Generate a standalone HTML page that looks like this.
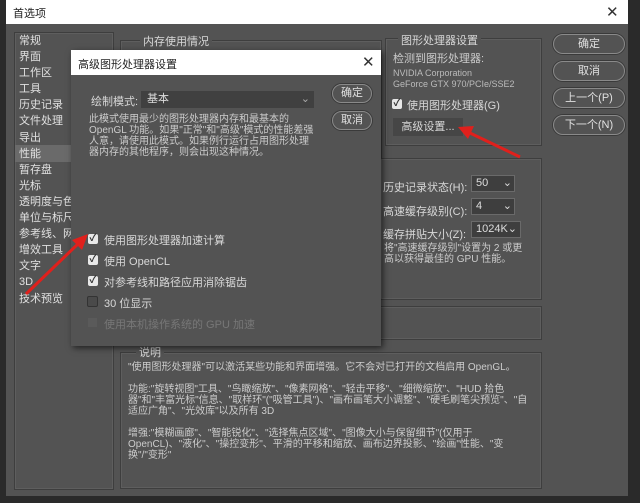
<html><head><style>
body{margin:0;width:640px;height:503px;background:#2a2a2a;position:relative;overflow:hidden;font-family:"Liberation Sans","Noto Sans CJK SC",sans-serif;font-size:11px;color:#d8d8d8}
.a{position:absolute}
.box{position:absolute;border:1px solid #3e3e3e;box-shadow:inset 0 0 0 1px #5e5e5e}
.btn{position:absolute;border:1px solid #8a8a8a;border-radius:11px;text-align:center;color:#e0e0e0;background:#535353;box-shadow:0 0 0 1px #3a3a3a}
.cb{position:absolute;width:10px;height:10px;background:#e8e8e8;border-radius:2px;color:#333;font-size:10px;line-height:10px;text-align:center;font-weight:bold}
.sel{position:absolute;background:#3e3e3e;border:1px solid #6a6a6a;color:#ddd;padding-left:4px;line-height:15px}
</style></head><body>
<div class="a" style="left:6px;top:0;width:622px;height:24px;background:#fff"></div>
<div class="a" style="left:13px;top:5px;color:#222;font-size:11px">首选项</div>
<div class="a" style="left:606px;top:3px;color:#333;font-size:15px">✕</div>
<div class="a" style="left:6px;top:24px;width:622px;height:472px;background:#535353"></div>
<div class="box" style="left:14px;top:32px;width:98px;height:456px"></div>
<div class="a" style="left:15px;top:145px;width:56px;height:17px;background:#6a6a6a"></div>
<div class="a" style="left:19px;top:33px;line-height:16.1px;color:#e0e0e0">常规<br>界面<br>工作区<br>工具<br>历史记录<br>文件处理<br>导出<br>性能<br>暂存盘<br>光标<br>透明度与色域<br>单位与标尺<br>参考线、网格<br>增效工具<br>文字<br>3D<br>技术预览</div>
<div class="box" style="left:120px;top:40px;width:260px;height:120px"></div>
<div class="a" style="left:140px;top:33px;background:#535353;padding:0 3px">内存使用情况</div>
<div class="box" style="left:385px;top:38px;width:155px;height:106px"></div>
<div class="a" style="left:398px;top:32px;background:#535353;padding:0 3px">图形处理器设置</div>
<div class="a" style="left:393px;top:50px;color:#ccc">检测到图形处理器:</div>
<div class="a" style="left:393px;top:68px;color:#bbb;font-size:9px;line-height:11px">NVIDIA Corporation<br>GeForce GTX 970/PCIe/SSE2</div>
<div class="cb" style="left:392px;top:99px">✓</div>
<div class="a" style="left:407px;top:97px">使用图形处理器(G)</div>
<div class="a" style="left:393px;top:118px;width:70px;height:18px;background:#464646;line-height:18px;text-align:center">高级设置...</div>
<div class="box" style="left:380px;top:158px;width:160px;height:140px"></div>
<div class="a" style="left:383px;top:177px;line-height:23.5px">历史记录状态(H):<br>高速缓存级别(C):<br>缓存拼贴大小(Z):</div>
<div class="sel" style="left:471px;top:175px;width:38px">50 <span style="float:right;padding-right:2px">⌄</span></div>
<div class="sel" style="left:471px;top:198px;width:38px">4 <span style="float:right;padding-right:2px">⌄</span></div>
<div class="sel" style="left:471px;top:221px;width:44px">1024K⌄</div>
<div class="a" style="left:384px;top:243px;font-size:10px;line-height:11px;color:#ccc">将"高速缓存级别"设置为 2 或更<br>高以获得最佳的 GPU 性能。</div>
<div class="box" style="left:120px;top:306px;width:420px;height:32px"></div>
<div class="box" style="left:120px;top:352px;width:420px;height:135px"></div>
<div class="a" style="left:136px;top:344px;background:#535353;padding:0 3px">说明</div>
<div class="a" style="left:128px;top:362px;width:400px;font-size:10px;line-height:11px;color:#ccc">"使用图形处理器"可以激活某些功能和界面增强。它不会对已打开的文档启用 OpenGL。<br><br>功能:"旋转视图"工具、"鸟瞰缩放"、"像素网格"、"轻击平移"、"细微缩放"、"HUD 拾色器"和"丰富光标"信息、"取样环"("吸管工具")、"画布画笔大小调整"、"硬毛刷笔尖预览"、"自适应广角"、"光效库"以及所有 3D<br><br>增强:"模糊画廊"、"智能锐化"、"选择焦点区域"、"图像大小与保留细节"(仅用于 OpenCL)、"液化"、"操控变形"、平滑的平移和缩放、画布边界投影、"绘画"性能、"变换"/"变形"</div>
<div class="btn" style="left:553px;top:34px;width:70px;height:18px;line-height:18px">确定</div>
<div class="btn" style="left:553px;top:61px;width:70px;height:18px;line-height:18px">取消</div>
<div class="btn" style="left:553px;top:88px;width:70px;height:18px;line-height:18px">上一个(P)</div>
<div class="btn" style="left:553px;top:115px;width:70px;height:18px;line-height:18px">下一个(N)</div>
<!-- dialog -->
<div class="a" style="left:71px;top:50px;width:310px;height:296px;background:#535353;box-shadow:2px 2px 6px rgba(0,0,0,.6)"></div>
<div class="a" style="left:71px;top:50px;width:310px;height:25px;background:#fff"></div>
<div class="a" style="left:78px;top:56px;color:#222">高级图形处理器设置</div>
<div class="a" style="left:362px;top:53px;color:#333;font-size:15px">✕</div>
<div class="a" style="left:91px;top:93px">绘制模式:</div>
<div class="a" style="left:141px;top:91px;width:167px;height:17px;background:#404040;line-height:17px;padding-left:6px;color:#ddd">基本<span style="float:right;padding-right:4px;color:#aaa">⌄</span></div>
<div class="btn" style="left:332px;top:84px;width:38px;height:17px;line-height:17px">确定</div>
<div class="btn" style="left:332px;top:111px;width:38px;height:17px;line-height:17px">取消</div>
<div class="a" style="left:89px;top:114px;width:225px;font-size:10px;line-height:11px;color:#ccc">此模式使用最少的图形处理器内存和最基本的 OpenGL 功能。如果"正常"和"高级"模式的性能差强人意，请使用此模式。如果例行运行占用图形处理器内存的其他程序，则会出现这种情况。</div>
<div class="cb" style="left:88px;top:234px">✓</div><div class="a" style="left:104px;top:232px">使用图形处理器加速计算</div>
<div class="cb" style="left:88px;top:255px">✓</div><div class="a" style="left:104px;top:253px">使用 OpenCL</div>
<div class="cb" style="left:88px;top:276px">✓</div><div class="a" style="left:104px;top:274px">对参考线和路径应用消除锯齿</div>
<div class="a" style="left:87px;top:296px;width:9px;height:9px;border:1px solid #333;background:#4a4a4a;border-radius:2px"></div><div class="a" style="left:104px;top:295px">30 位显示</div>
<div class="a" style="left:88px;top:318px;width:9px;height:9px;background:#5a5a5a"></div><div class="a" style="left:104px;top:316px;color:#777">使用本机操作系统的 GPU 加速</div>
<svg class="a" style="left:0;top:0" width="640" height="503">
<path d="M26 294 L80 242" stroke="#e0201c" stroke-width="3"/><path d="M88 234 L72 240 L82 250Z" fill="#e0201c"/>
<path d="M520 157 L470 133" stroke="#e0201c" stroke-width="3"/><path d="M458 127 L474 126 L468 139Z" fill="#e0201c"/>
</svg>
</body></html>
